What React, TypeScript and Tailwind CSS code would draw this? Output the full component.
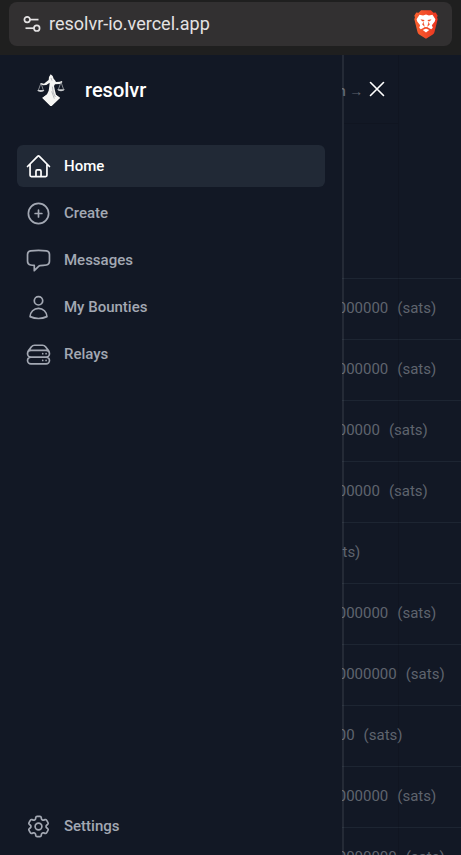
import type { ComponentType } from "react";
import {
  HiOutlineChatBubbleLeft,
  HiOutlineCog6Tooth,
  HiOutlineHome,
  HiOutlinePlusCircle,
  HiOutlineServerStack,
  HiOutlineUser,
  HiOutlineXMark,
} from "react-icons/hi2";
import clsx from "clsx";

type NavItem = {
  name: string;
  icon: ComponentType<{ className?: string }>;
  current?: boolean;
};

const navigation: NavItem[] = [
  { name: "Home", icon: HiOutlineHome, current: true },
  { name: "Create", icon: HiOutlinePlusCircle },
  { name: "Messages", icon: HiOutlineChatBubbleLeft },
  { name: "My Bounties", icon: HiOutlineUser },
  { name: "Relays", icon: HiOutlineServerStack },
];

const settings: NavItem = { name: "Settings", icon: HiOutlineCog6Tooth };

const rewards = [
  "1000000000",
  "1000000000",
  "100000000",
  "100000000",
  "0",
  "1000000000",
  "10000000000",
  "100000",
  "1000000000",
  "10000000000",
];

const TuneIcon = () => (
  <svg
    viewBox="0 0 18 18"
    className="size-[18px] text-[#e4e2e3]"
    fill="none"
    stroke="currentColor"
    strokeWidth="1.7"
  >
    <circle cx="4.2" cy="4.6" r="2.8" />
    <path d="M7 4.6h8.5" />
    <circle cx="13.8" cy="13.2" r="2.8" />
    <path d="M11 13.2H2.5" />
  </svg>
);

const BraveIcon = () => (
  <svg viewBox="0 0 74 88" className="h-[29px] w-6">
    <defs>
      <linearGradient id="brave" x1="0" x2="1" y1="0" y2="0">
        <stop offset="0" stopColor="#fb6230" />
        <stop offset="1" stopColor="#ea3420" />
      </linearGradient>
    </defs>
    <path
      d="M22 0h30l8 8 7-1 6 10-2 5 2 6-10 40q-1 4-5 7L37 88 16 75q-4-3-5-7L1 28l2-6-2-5 6-10 7 1z"
      fill="url(#brave)"
    />
    <path
      d="M17 14l11 2 9-3 9 3 11-2 9 14-2 7-9 11 3 8-5 5-9-5-7-2-7 2-9 5-5-5 3-8-9-11-2-7z"
      fill="#fff"
    />
    <path d="M37 56l10 5-10 8-10-8z" fill="#fff" />
    <path
      d="M20 28l12 2-1 4-6 0zM54 28l-12 2 1 4 6 0zM31 35l-1 7 3 5-3 2-5-6zM43 35l1 7-3 5 3 2 5-6zM31 50l6 3 6-3 1 2-7 5-7-5z"
      fill="#f2502a"
    />
  </svg>
);

const JusticeLogo = () => (
  <svg viewBox="0 0 84 96" className="h-8 w-7" fill="#f5f5f3">
    <path d="M41 1l6 5 3 8 4 5 3 5 11-1 7-2 1 4-8 5-14 1-3 5 3 14 3 12 12 10-27 26-26-26 14-11 5-11 2-14 1-10-10 7-9 1-8-3 1-4 9 2 10-8 4-3 1-9z" />
    <path d="M16 71l14-9h26l13 9-27 25z" />
    <path
      d="M46 38l3 18 6 13M44 52l8 22M42 12l3 8"
      fill="none"
      stroke="#9a9da3"
      strokeWidth="2"
    />
    <path
      d="M12 27L4 49M12 27l7 22M72 24l-8 23M72 24l8 23"
      fill="none"
      stroke="#c3c5c9"
      strokeWidth="2"
    />
    <path d="M1 48h21c-1 8-20 8-21 0zM61 46h22c-1 8-21 8-22 0z" fill="#c9cbce" />
  </svg>
);

const NavLink = ({ item }: { item: NavItem }) => (
  <a
    href="#"
    className={clsx(
      "flex items-center gap-3 rounded-md py-[7px] pl-2 text-[15px] leading-7 font-medium",
      item.current ? "bg-[#212936] text-white" : "text-[#a3a8b3]"
    )}
  >
    <item.icon className="size-[27px] shrink-0" />
    {item.name}
  </a>
);

const AddressBar = () => (
  <div className="bg-[#1f1f1f] px-[9px] pt-0.5 pb-[9px]">
    <div className="flex h-11 items-center rounded-lg bg-[#323031] px-[14px]">
      <TuneIcon />
      <span className="ml-2 flex-1 text-lg text-[#e4e2e3]">
        resolvr-io.vercel.app
      </span>
      <BraveIcon />
    </div>
  </div>
);

const BountyPage = () => (
  <main className="absolute inset-0 overflow-hidden text-[#5f646e]">
    <div className="flex h-[223px] items-start pt-6 pl-[311px]">
      <a href="#" className="text-sm leading-6 font-medium whitespace-nowrap">
        Login →
      </a>
    </div>
    <ul>
      {rewards.map((reward, i) => (
        <li
          key={i}
          className="flex h-[61px] items-center gap-[9px] border-t border-[#1d2532] pb-px pl-[304px] text-[15px]"
        >
          <span>{reward}</span>
          <span>(sats)</span>
        </li>
      ))}
    </ul>
  </main>
);

const Drawer = () => (
  <div className="absolute inset-y-0 left-0 flex">
    <aside className="flex w-[344px] flex-col border-r-2 border-white/8 bg-[#121825] bg-clip-padding px-[17px] pb-2">
      <div className="flex h-[69px] items-center gap-5 pl-5">
        <JusticeLogo />
        <span className="text-xl font-medium text-white">resolvr</span>
      </div>
      <nav className="mt-[21px] flex flex-1 flex-col gap-[5px]">
        {navigation.map((item) => (
          <NavLink key={item.name} item={item} />
        ))}
        <div className="mt-auto">
          <NavLink item={settings} />
        </div>
      </nav>
    </aside>
    <div className="w-[55px] border-r border-black/10">
      <div className="flex h-[69px] items-center border-b border-black/10 pl-5">
        <button type="button" aria-label="Close sidebar" className="text-white">
          <HiOutlineXMark className="size-[26px]" />
        </button>
      </div>
    </div>
  </div>
);

export default function App() {
  return (
    <div className="flex h-screen flex-col overflow-hidden font-[Roboto,sans-serif]">
      <AddressBar />
      <div className="relative flex-1 bg-[#121825]">
        <BountyPage />
        <Drawer />
      </div>
    </div>
  );
}
